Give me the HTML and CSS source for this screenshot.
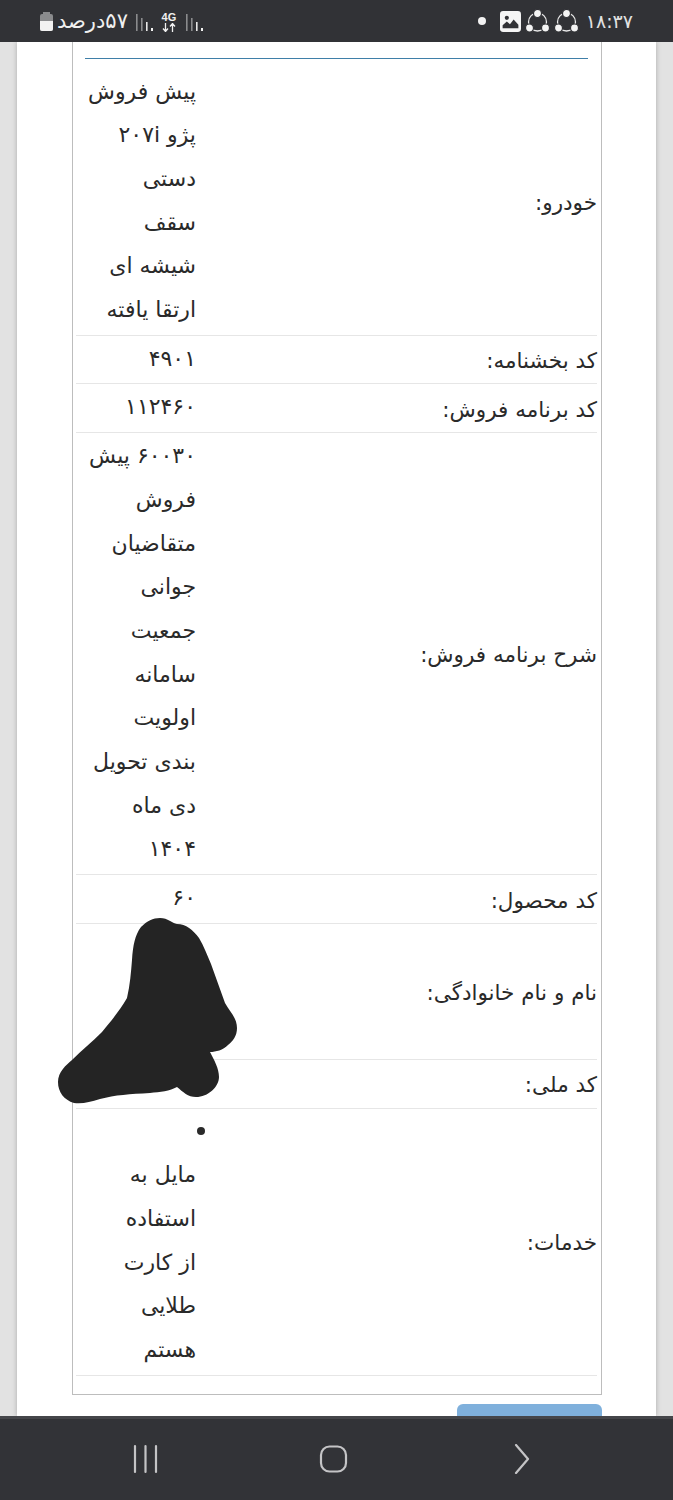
FILE: index.html
```html
<!DOCTYPE html>
<html lang="fa">
<head>
<meta charset="utf-8">
<title>پیش فروش</title>
<link rel="stylesheet" href="styles.css">
</head>
<body>
<div class="phone">
  <header class="status">
    <div class="status-group">
      <span class="time">۱۸:۳۷</span>
      <svg class="share" viewBox="0 0 25 24"><circle cx="12.5" cy="13" r="9" fill="none" stroke="#e8e8e8" stroke-width="1.300"/><g fill="#f4f4f4" stroke="#313236" stroke-width="1.200"><circle cx="12.500" cy="4.500" r="4"/><circle cx="4.500" cy="19" r="4"/><circle cx="20.500" cy="19" r="4"/></g></svg>
      <svg class="share" viewBox="0 0 25 24"><circle cx="12.5" cy="13" r="9" fill="none" stroke="#e8e8e8" stroke-width="1.300"/><g fill="#f4f4f4" stroke="#313236" stroke-width="1.200"><circle cx="12.500" cy="4.500" r="4"/><circle cx="4.500" cy="19" r="4"/><circle cx="20.500" cy="19" r="4"/></g></svg>
      <svg class="pic" viewBox="0 0 20 20"><rect width="20" height="20" rx="3" fill="#f5f5f5"/><circle cx="6.5" cy="6.5" r="2" fill="#313236"/><path d="M2.5 16.5v-3l4-3.5 3 2.5 3.500-4.500 4.500 5v3.500z" fill="#313236"/></svg>
      <span class="dot"></span>
    </div>
    <div class="status-group left">
      <svg class="bars" viewBox="0 0 17 17"><rect x="0" y="0" width="1.600" height="17" fill="#8a8b8d"/><rect x="5" y="4" width="1.600" height="13" fill="#8a8b8d"/><rect x="10" y="8" width="1.600" height="9" fill="#e8e8e8"/><rect x="15" y="14" width="2" height="3" fill="#f2f2f2"/></svg>
      <span class="net"><span class="net-4g">4G</span><svg class="arrows" viewBox="0 0 14 9"><path d="M3.500 0v8M1 5.500l2.500 3 2.500-3M10.500 9V1M8 3.500l2.500-3 2.500 3" fill="none" stroke="#f0f0f0" stroke-width="1.300"/></svg></span>
      <svg class="bars" viewBox="0 0 17 17"><rect x="0" y="0" width="1.600" height="17" fill="#8a8b8d"/><rect x="5" y="4" width="1.600" height="13" fill="#8a8b8d"/><rect x="10" y="8" width="1.600" height="9" fill="#e8e8e8"/><rect x="15" y="14" width="2" height="3" fill="#f2f2f2"/></svg>
      <span class="battery-text">۵۷درصد</span>
      <span class="battery"><span class="battery-cap"></span><span class="battery-body"><span class="battery-fill"></span></span></span>
    </div>
  </header>

  <main class="viewport">
    <div class="panel">
      <section class="frame">
        <div class="rule"></div>
        <div class="rows">
          <div class="row">
            <div class="label">خودرو:</div>
            <div class="value">پیش فروش<br>پژو ۲۰۷i<br>دستی<br>سقف<br>شیشه ای<br>ارتقا یافته</div>
          </div>
          <div class="row">
            <div class="label">کد بخشنامه:</div>
            <div class="value">۴۹۰۱</div>
          </div>
          <div class="row">
            <div class="label">کد برنامه فروش:</div>
            <div class="value">۱۱۲۴۶۰</div>
          </div>
          <div class="row">
            <div class="label">شرح برنامه فروش:</div>
            <div class="value">۶۰۰۳۰ پیش<br>فروش<br>متقاضیان<br>جوانی<br>جمعیت<br>سامانه<br>اولویت<br>بندی تحویل<br>دی ماه<br>۱۴۰۴</div>
          </div>
          <div class="row">
            <div class="label">کد محصول:</div>
            <div class="value">۶۰</div>
          </div>
          <div class="row">
            <div class="label">نام و نام خانوادگی:</div>
            <div class="value">&nbsp;<br>&nbsp;<br>&nbsp;</div>
          </div>
          <div class="row">
            <div class="label">کد ملی:</div>
            <div class="value">&nbsp;</div>
          </div>
          <div class="row">
            <div class="label">خدمات:</div>
            <div class="value">
              <ul class="services"><li><br>مایل به<br>استفاده<br>از کارت<br>طلایی<br>هستم</li></ul>
            </div>
          </div>
        </div>
      </section>
      <div class="actions"><button class="submit" type="button"></button></div>
    </div>
  </main>

  <footer class="nav">
    <svg class="nav-icon" viewBox="0 0 30 30"><path d="M4 2v26M14.500 2v26M25 2v26" fill="none" stroke="#c4c4c6" stroke-width="2.200" stroke-linecap="round"/></svg>
    <svg class="nav-icon" viewBox="0 0 30 30"><rect x="2" y="2.500" width="25" height="25" rx="8.500" fill="none" stroke="#c4c4c6" stroke-width="2.200"/></svg>
    <svg class="nav-icon" viewBox="0 0 30 30"><path d="M9 1l12 14L9 29" fill="none" stroke="#c4c4c6" stroke-width="2.200" stroke-linecap="round" stroke-linejoin="round"/></svg>
  </footer>

  <svg class="blob" viewBox="50 910 200 200"><path d="M160 918C168 918 172 923 177 924C186 924 193 930 199 938C204 946 207 955 211 964L225 1003C230 1012 237 1018 237 1028C237 1036 233 1041 228 1045C223 1050 216 1052 210 1052C214 1060 219 1068 219 1077C219 1087 208 1097 196 1097C188 1097 183 1092 177 1087C170 1091 160 1092 150 1093C130 1094 115 1095 100 1099C90 1102 83 1104 74 1103C64 1100 58 1092 58 1082C58 1072 66 1065 72 1060C82 1050 92 1042 102 1032C112 1020 120 1010 127 998C130 985 131 972 132 960C133 945 135 935 141 927C147 921 153 918 160 918Z" fill="#242424"/></svg>
</div>
</body>
</html>
```
FILE: styles.css
```css
* { box-sizing: border-box; }
html, body { margin: 0; padding: 0; }
body { font-family: "DejaVu Sans", "Noto Sans", sans-serif; color: #2a2a2a; }

.phone {
  position: relative;
  width: 673px;
  height: 1500px;
  display: flex;
  flex-direction: column;
  overflow: hidden;
  background: #e2e2e2;
}

/* status bar */
.status {
  flex: 0 0 42px;
  height: 42px;
  background: #313236;
  display: flex;
  direction: ltr;
  flex-direction: row-reverse;
  justify-content: space-between;
  align-items: center;
  padding: 0 40px;
  color: #eee;
  z-index: 2;
}
.status-group { display: flex; align-items: center; flex-direction: row-reverse; }
.time { font-size: 19px; margin-left: 7px; color: #e2e2e2; }
.share { width: 25px; height: 24px; margin-left: 4px; }
.pic { width: 21px; height: 21px; margin-left: 7px; }
.dot { width: 8px; height: 8px; border-radius: 50%; background: #f2f2f2; margin-right: 7px; }

.left .bars { width: 17px; height: 17px; margin-top: 2px; }
.net { display: flex; flex-direction: column; align-items: center; width: 14px; margin: 1px 10px 0 9px; line-height: 1; }
.net-4g { font-family: "Liberation Sans", sans-serif; font-size: 11px; font-weight: 700; color: #f0f0f0; }
.arrows { width: 14px; height: 9px; }
.battery-text { direction: rtl; font-size: 21px; color: #f0f0f0; margin: 0 8px 0 4px; }
.battery { display: flex; flex-direction: column; align-items: center; width: 13px; }
.battery-cap { width: 7px; height: 2px; background: #8a8b8d; }
.battery-body { width: 13px; height: 17px; border-radius: 2px; background: #8a8b8d; display: flex; align-items: flex-end; overflow: hidden; }
.battery-fill { width: 100%; height: 10px; background: #f2f2f2; }

/* scrolled page */
.viewport { flex: 1 1 auto; min-height: 0; overflow: hidden; direction: rtl; }
.panel {
  margin: 0 17px;
  height: 100%;
  background: #fff;
  box-shadow: 0 0 5px rgba(0, 0, 0, .25);
  padding: 0 54px 0 55px;
}
.frame {
  border: 1px solid #bdbdbd;
  border-top: 0;
  padding: 16px 4px 18.500px 3px;
}
.rule { height: 1px; margin: 0 9px 9.500px 9px; background: #3f7fa8; }
.row {
  display: flex;
  align-items: center;
  border-bottom: 1px solid #e6e6e6;
}
.label { flex: 1 1 auto; font-size: 21.500px; line-height: 30px; padding-top: 3px; }
.value {
  flex: 0 0 120px;
  align-self: stretch;
  font-size: 22px;
  line-height: 43.700px;
  padding: 1px 0 3px;
  text-align: right;
  white-space: nowrap;
}
.services { margin: 0; padding: 0; list-style: none; }
.services li { position: relative; }
.services li::before {
  content: "";
  position: absolute;
  right: -9px;
  top: 17px;
  width: 8px;
  height: 8px;
  border-radius: 50%;
  background: #2a2a2a;
}
.actions { display: flex; justify-content: flex-start; margin-top: 9px; }
.submit { width: 145px; height: 40px; border: 0; border-radius: 6px; background: #7fb0dc; }

/* navigation bar */
.nav {
  flex: 0 0 84px;
  height: 84px;
  background: #323337;
  border-top: 3px solid #45464a;
  display: flex;
  align-items: center;
  z-index: 2;
  padding: 0 136px 2px 131px;
  justify-content: space-between;
}
.nav-icon { width: 30px; height: 30px; }

.blob { position: absolute; left: 50px; top: 910px; width: 200px; height: 200px; z-index: 1; }
```
